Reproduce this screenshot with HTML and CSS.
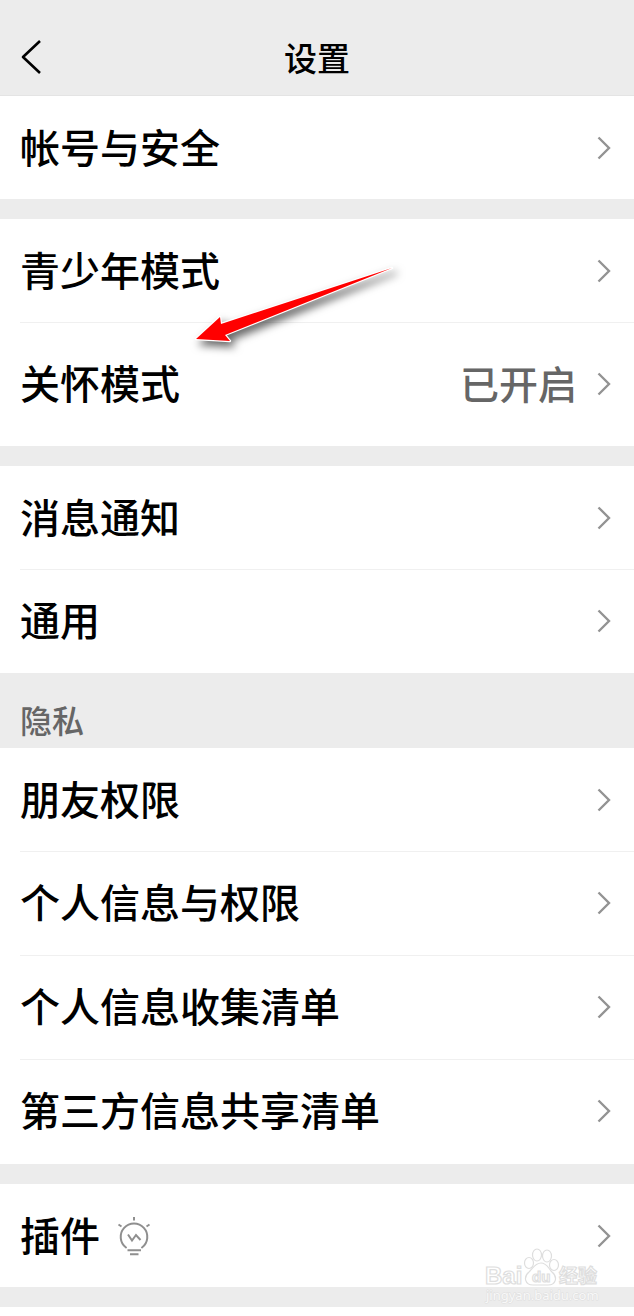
FILE: index.html
```
<!DOCTYPE html>
<html lang="zh-CN">
<head>
  <meta charset="UTF-8">
  <meta name="viewport" content="width=device-width, initial-scale=1.0">
  <title>设置</title>
  <link rel="stylesheet" href="styles.css">
</head>
<body>
  <svg class="sprite" aria-hidden="true">
    <symbol id="chevron" viewBox="0 0 14 24">
      <path d="M1.5 1.5 L12 12 L1.5 22.5" fill="none" stroke="#939393" stroke-width="2.4"/>
    </symbol>
  </svg>

  <header class="topbar">
    <button class="back" aria-label="返回">
      <svg width="22" height="36" viewBox="0 0 22 36" aria-hidden="true">
        <path d="M20 2 L3 18 L20 34" fill="none" stroke="#000" stroke-width="2.6" stroke-linejoin="round"/>
      </svg>
    </button>
    <h1>设置</h1>
  </header>

  <main>
    <nav class="group">
      <a class="row" href="#account"><span>帐号与安全</span><svg class="chevron"><use href="#chevron"/></svg></a>
    </nav>

    <nav class="group">
      <a class="row" href="#teen"><span>青少年模式</span><svg class="chevron"><use href="#chevron"/></svg></a>
      <a class="row tall" href="#care"><span>关怀模式</span><span class="value">已开启</span><svg class="chevron"><use href="#chevron"/></svg></a>
      <svg class="arrow" width="220" height="100" viewBox="0 0 220 100" aria-hidden="true">
        <path d="M201 7 L30 63 L29 56 L5 78 L39 80 L34 74 Z" fill="#f00" stroke="#fff" stroke-width="2.4" stroke-linejoin="round" paint-order="stroke"/>
      </svg>
    </nav>

    <nav class="group">
      <a class="row" href="#notice"><span>消息通知</span><svg class="chevron"><use href="#chevron"/></svg></a>
      <a class="row" href="#general"><span>通用</span><svg class="chevron"><use href="#chevron"/></svg></a>
    </nav>

    <h2 class="section">隐私</h2>
    <nav class="group">
      <a class="row" href="#friends"><span>朋友权限</span><svg class="chevron"><use href="#chevron"/></svg></a>
      <a class="row" href="#personal"><span>个人信息与权限</span><svg class="chevron"><use href="#chevron"/></svg></a>
      <a class="row" href="#collect"><span>个人信息收集清单</span><svg class="chevron"><use href="#chevron"/></svg></a>
      <a class="row" href="#share"><span>第三方信息共享清单</span><svg class="chevron"><use href="#chevron"/></svg></a>
    </nav>

    <nav class="group">
      <a class="row" href="#plugins">
        <span>插件</span>
        <svg class="bulb" width="34" height="40" viewBox="0 0 34 40" aria-hidden="true">
          <g fill="none" stroke="#8f8f8f" stroke-width="2">
            <path d="M9 31.5 A13.3 13.3 0 1 1 25 31.5" stroke-linecap="round"/>
            <path d="M17 1 V4.5 M1.5 8.5 L4.5 10.5 M32.5 8.5 L29.5 10.5"/>
            <path d="M11 18.5 L15 24.5 L19 19 L23.5 24"/>
            <path d="M10.5 34.3 H24 M13 38.3 H21.5"/>
          </g>
        </svg>
        <svg class="chevron"><use href="#chevron"/></svg>
      </a>
      <svg class="watermark" width="120" height="64" viewBox="0 0 120 64" aria-hidden="true">
        <g fill="#fff" stroke="#dedede" stroke-width="1.2">
          <text x="3" y="39" class="wm-name">Bai</text>
          <ellipse cx="47" cy="18" rx="4.5" ry="5.5"/>
          <ellipse cx="55" cy="10" rx="4.5" ry="6"/>
          <ellipse cx="65" cy="11" rx="4.5" ry="6"/>
          <ellipse cx="72" cy="20" rx="4.5" ry="5.5"/>
          <path d="M59 18 C53 18 51 23 47 27 C41 32 43 40 51 40 H66 C74 40 76 32 70 27 C66 23 65 18 59 18 Z"/>
          <text x="50" y="37" class="wm-du">du</text>
          <text x="77" y="38" class="wm-cn">经验</text>
        </g>
        <text x="4" y="55" class="wm-url">jingyan.baidu.com</text>
      </svg>
    </nav>
  </main>
</body>
</html>
```
FILE: styles.css
```
:root {
  --bar: #ececec;
  --line: #f0f0f0;
  --muted: #666;
}

* {
  box-sizing: border-box;
}

body {
  margin: 0;
  background: #fff;
  color: #000;
  font-family: "Noto Sans CJK SC", sans-serif;
  font-weight: 500;
}

.sprite {
  display: none;
}

.topbar {
  display: grid;
  grid-template-columns: 1fr auto 1fr;
  align-items: center;
  padding: 18px 20px 0;
  height: 96px;
  background: var(--bar);
  border-bottom: 1px solid #e4e4e4;
}

.back {
  justify-self: start;
  display: flex;
  padding: 0;
  border: none;
  background: none;
  cursor: pointer;
}

h1 {
  margin: 0;
  font-size: 33px;
  line-height: 48px;
  font-weight: 500;
}

main {
  border-bottom: 20px solid var(--bar);
}

.group {
  position: relative;
}

.group + .group {
  border-top: 20px solid var(--bar);
}

.section + .group {
  padding-bottom: 1px;
}

.row {
  display: flex;
  align-items: center;
  height: 103px;
  padding: 0 23px 0 20px;
  color: inherit;
  font-size: 40px;
  line-height: 60px;
  text-decoration: none;
}

.row + .row {
  height: 104px;
  background: linear-gradient(var(--line), var(--line)) 20px 0 / 100% 1px no-repeat;
}

.row.tall {
  height: 124px;
}

.row span {
  padding-bottom: 4px;
}

.value {
  margin-left: auto;
  color: var(--muted);
  font-size: 39px;
}

.chevron {
  flex: none;
  width: 14px;
  height: 24px;
  margin-left: auto;
}

.value + .chevron {
  margin-left: 20px;
}

.bulb {
  margin-left: 17px;
}

.section {
  margin: 0;
  padding: 22px 20px 5px;
  background: var(--bar);
  color: var(--muted);
  font-size: 32px;
  line-height: 48px;
  font-weight: 500;
}

.arrow {
  position: absolute;
  top: 42px;
  left: 191px;
  pointer-events: none;
  overflow: visible;
  filter: drop-shadow(4px 5px 4px rgba(0, 0, 0, 0.6));
}

.watermark {
  position: absolute;
  right: 32px;
  bottom: -22px;
  pointer-events: none;
}

.wm-name {
  font: bold 24px "Liberation Sans", sans-serif;
}

.wm-du {
  font: bold 15px "Liberation Sans", sans-serif;
}

.wm-cn {
  font: bold 19px "Noto Sans CJK SC", sans-serif;
}

.wm-url {
  font: 13px "Noto Sans", sans-serif;
  fill: #f8f8f8;
  stroke: #dedede;
  stroke-width: 1px;
  paint-order: stroke;
}
```
